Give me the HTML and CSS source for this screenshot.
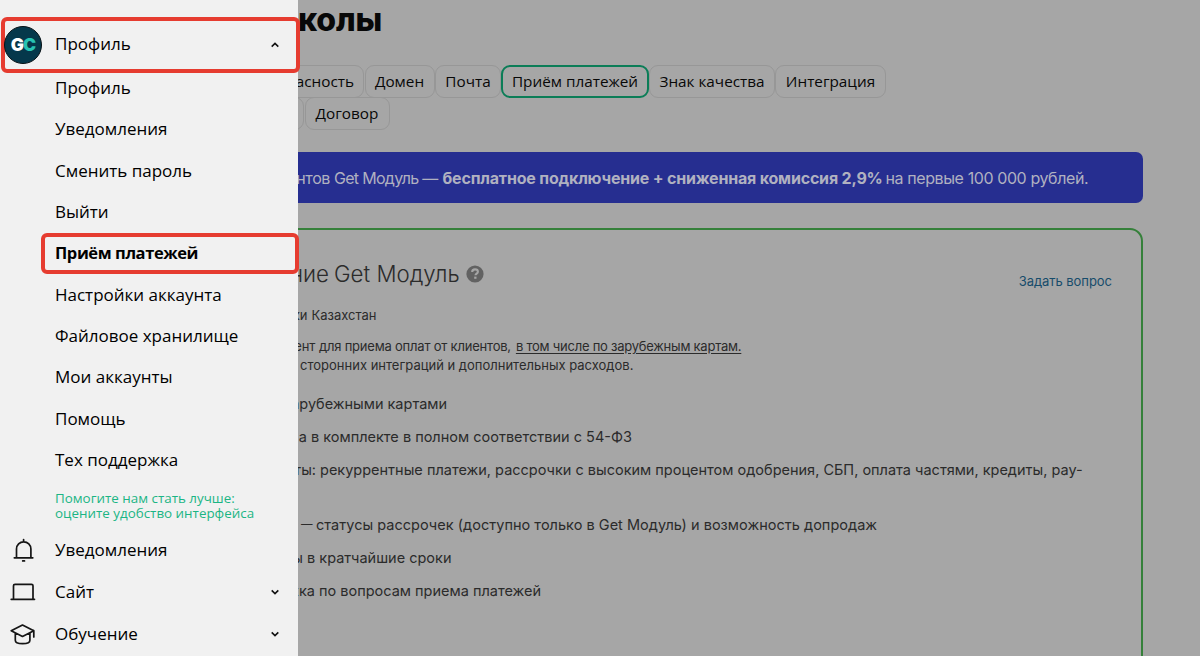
FILE: index.html
```html
<!DOCTYPE html>
<html lang="ru">
<head>
<meta charset="utf-8">
<title>Приём платежей</title>
<link rel="stylesheet" href="styles.css">
</head>
<body>
<main class="page">
  <h1 class="title">колы</h1>
  <nav class="tabs">
    <div class="tab-row">
      <span class="tab tab-security">асность</span><span class="tab tab-domain">Домен</span><span class="tab tab-mail">Почта</span><span class="tab tab-pay">Приём платежей</span><span class="tab tab-quality">Знак качества</span><span class="tab tab-integration">Интеграция</span>
    </div>
    <div class="tab-row">
      <span class="tab tab-prev"></span><span class="tab tab-contract">Договор</span>
    </div>
  </nav>
  <section class="banner">
    <span class="lead lead-banner">нтов</span><span class="banner-name">Get Модуль —</span><b>бесплатное подключение + сниженная комиссия 2,9%</b><span class="banner-end">на первые 100 000 рублей.</span>
  </section>
  <section class="card">
    <header class="card-head">
      <h2 class="card-title"><span class="lead lead-title">ние</span>Get Модуль
        <svg class="help" viewBox="0 0 18 18"><circle cx="9" cy="9" r="8.6" fill="#626262"/><path d="M6.2 7.1C6.2 5.3 7.4 4.4 9 4.4c1.700 0 2.900.9 2.900 2.400 0 1.900-2.400 1.900-2.400 3.500" fill="none" stroke="#a6a6a6" stroke-width="2.100"/><rect x="8.200" y="11.600" width="2.300" height="2.200" fill="#a6a6a6"/></svg>
      </h2>
      <a class="ask">Задать вопрос</a>
    </header>
    <p class="note country"><span class="lead lead-country">ки</span>Казахстан</p>
    <p class="note accept"><span class="lead lead-accept">ент</span><span>для приема оплат от клиентов,</span><u>в том числе по зарубежным картам.</u></p>
    <p class="note"><span class="lead lead-third"></span>сторонних интеграций и дополнительных расходов.</p>
    <ul class="benefits">
      <li><span class="lead lead-cards">арубежными</span>картами</li>
      <li><span class="lead lead-kit">а</span>в комплекте в полном соответствии с 54-ФЗ</li>
      <li class="tall"><span class="lead lead-tools">ты:</span>рекуррентные платежи, рассрочки с высоким процентом одобрения, СБП, оплата частями, кредиты, pay-</li>
      <li class="status"><span class="lead lead-status"></span><span class="dash">—</span>статусы рассрочек (доступно только в Get Модуль) и возможность допродаж</li>
      <li><span class="lead lead-fast">ы</span>в кратчайшие сроки</li>
      <li><span class="lead lead-help">жка</span>по вопросам приема платежей</li>
    </ul>
  </section>
</main>

<aside class="drawer">
  <div class="profile">
    <span class="avatar"><span>G</span><span class="avatar-c">C</span></span>
    <span class="profile-name">Профиль</span>
    <svg class="chevron" viewBox="0 0 10 10"><path d="M1.700 6.600 5 3.400l3.300 3.200"/></svg>
  </div>
  <ul class="submenu">
    <li>Профиль</li>
    <li>Уведомления</li>
    <li>Сменить пароль</li>
    <li>Выйти</li>
    <li class="active">Приём платежей</li>
    <li>Настройки аккаунта</li>
    <li>Файловое хранилище</li>
    <li>Мои аккаунты</li>
    <li>Помощь</li>
    <li>Тех поддержка</li>
  </ul>
  <p class="feedback">Помогите нам стать лучше:<br>оцените удобство интерфейса</p>
  <ul class="menu">
    <li>
      <svg class="icon bell" viewBox="0 0 28 28"><path d="M7.500 20.500V12a7.200 7.200 0 0 1 14.400 0v8.500M5.300 20.800h18.500M14.600 4.800V2.600M13.700 23.900h1.800"/></svg>
      <span class="menu-name">Уведомления</span>
    </li>
    <li>
      <svg class="icon" viewBox="0 0 28 28"><path d="M4.500 21V7.800q0-1.500 1.500-1.500h16.500q1.500 0 1.500 1.500V21M2.200 21.300h23.300"/></svg>
      <span class="menu-name">Сайт</span>
      <svg class="chevron" viewBox="0 0 10 10"><path d="M1.700 3.400 5 6.600l3.300-3.200"/></svg>
    </li>
    <li>
      <svg class="icon" viewBox="0 0 28 28"><path d="M2.200 10.700 13.500 5l11.300 5.700-11.300 5.700zM24.800 10.700v6.300M6.300 13.200v7q0 3.500 7.300 3.500t7.300-3.500v-7"/></svg>
      <span class="menu-name">Обучение</span>
      <svg class="chevron" viewBox="0 0 10 10"><path d="M1.700 3.400 5 6.600l3.300-3.200"/></svg>
    </li>
  </ul>
</aside>
</body>
</html>
```
FILE: styles.css
```css
* { box-sizing: border-box; }
body {
  margin: 0;
  height: 656px;
  overflow: hidden;
  background: #a6a6a6;
  color: #080808;
  font-family: "Open Sans", sans-serif;
}
h1, h2, p, ul { margin: 0; padding: 0; }
li { list-style: none; }

.page { padding-left: 240px; height: 656px; overflow: hidden; white-space: nowrap; }
.title {
  height: 65px;
  padding-left: 58px;
  font: 800 32px/40px Inter, sans-serif;
  letter-spacing: -0.2px;
}
.tabs { height: 87px; }
.tab-row { display: flex; height: 32px; gap: 1px; }
.tab {
  flex: none;
  height: 33px;
  border: 1px solid #979797;
  border-radius: 9px;
  text-align: center;
  font-size: 15.3px;
  line-height: 31px;
}
.tab-security { width: 124px; padding-right: 9px; text-align: right; }
.tab-domain { width: 70px; padding-right: 1px; }
.tab-mail { width: 66px; margin-left: -1px; }
.tab-pay { width: 148px; margin-left: -1px; border: 2px solid #0b7d57; line-height: 29px; }
.tab-quality { width: 126px; margin-left: -1px; }
.tab-integration { width: 111px; margin-left: -1px; }
.tab-prev { width: 64px; }
.tab-contract { width: 85px; padding-right: 1px; }

.lead { flex: none; display: inline-flex; justify-content: flex-end; }
.lead-banner { width: 94px; padding-right: 4px; }
.lead-title { width: 94px; padding-right: 5px; }
.lead-country { width: 71.500px; padding-right: 4px; }
.lead-accept { width: 79px; padding-right: 4px; }
.lead-third { width: 60px; }
.lead-cards { width: 147.500px; padding-right: 4px; }
.lead-kit { width: 71px; padding-right: 4px; }
.lead-tools { width: 80px; padding-right: 4px; }
.lead-status { width: 61px; }
.status { letter-spacing: 0.025px; }
.dash { flex: none; width: 15px; font-size: 11.500px; }
.lead-fast { width: 67px; padding-right: 4px; }
.lead-help { width: 79px; padding-right: 4px; }

.banner {
  display: flex;
  width: 903px;
  height: 51px;
  border-radius: 7px;
  background: #262e90;
  color: #b0b1c0;
  font: 16px/53px Inter, sans-serif;
  letter-spacing: -0.4px;
}
.banner-name { width: 108.500px; letter-spacing: -0.7px; }
.banner b { width: 443px; font-weight: 700; letter-spacing: -0.19px; }

.card {
  width: 903px;
  height: 470px;
  margin-top: 25px;
  border: 2px solid #35803a;
  border-radius: 13px;
  color: #2b2b2b;
  font-family: Inter, sans-serif;
}
.card .lead { margin-left: -2px; }
.card-head { display: flex; justify-content: space-between; height: 76px; padding: 26px 29px 0 0; }
.card-title { display: flex; align-items: center; height: 35px; font-size: 22.300px; font-weight: 300; }
.help { width: 18px; height: 18px; margin-left: 6px; }
.ask { padding-top: 15px; font-size: 13px; line-height: 21px; color: #174c6b; letter-spacing: -0.05px; }
.note { display: flex; height: 19px; font-size: 13px; line-height: 19px; }
.country { height: 31px; }
.accept { letter-spacing: -0.21px; }
.accept u { margin-left: 5px; letter-spacing: -0.24px; text-underline-offset: 2px; }
.benefits { padding-top: 12px; font-size: 14.500px; line-height: 33px; }
.benefits li { display: flex; height: 33.200px; }
.benefits .tall { height: 54.700px; }

.drawer {
  position: fixed;
  left: 0;
  top: 0;
  width: 298px;
  height: 656px;
  padding-top: 17px;
  background: #f1f1f1;
  font-size: 17px;
  color: #000;
}
.profile {
  display: flex;
  align-items: center;
  width: 299px;
  height: 56px;
  margin-left: 1px;
  border: 4px solid #e63c30;
  border-radius: 6px;
}
.avatar {
  display: flex;
  align-items: center;
  justify-content: center;
  flex: none;
  width: 38px;
  height: 38px;
  margin-left: -1px;
  border: 1.500px solid #061116;
  border-radius: 50%;
  background: #05384b;
  color: #fff;
  font: 900 17.500px/34px Inter, sans-serif;
  letter-spacing: -0.9px;
}
.avatar-c { color: #27c3b3; }
.profile-name { flex: 1; padding: 0 0 3px 13px; }
.chevron { width: 10px; height: 10px; fill: none; stroke: #111; stroke-width: 1.600; }
.profile .chevron { margin-right: 16px; }
.submenu { padding: 0 0 0 55px; margin-top: -6px; }
.submenu li { height: 41.350px; line-height: 42px; }
.submenu .active {
  width: 258px;
  height: 40.350px;
  margin: 1px 0 0 -14px;
  padding-left: 10px;
  border: 4px solid #e63c30;
  border-radius: 6px;
  line-height: 32px;
  font-weight: 700;
  font-size: 16.500px;
  letter-spacing: -0.42px;
}
.feedback { height: 48.500px; padding: 11px 0 0 55px; color: #1bb584; font-size: 13.400px; line-height: 15px; }
.menu li { display: flex; align-items: center; height: 42px; padding: 0 19px 0 9px; }
.menu .chevron { margin-right: -1px; }
.icon { width: 28px; height: 28px; fill: none; stroke: #151515; stroke-width: 1.700; stroke-linejoin: round; stroke-linecap: round; }
.bell { margin-top: 2px; }
.menu-name { flex: 1; padding: 0 0 1px 18px; }
```
